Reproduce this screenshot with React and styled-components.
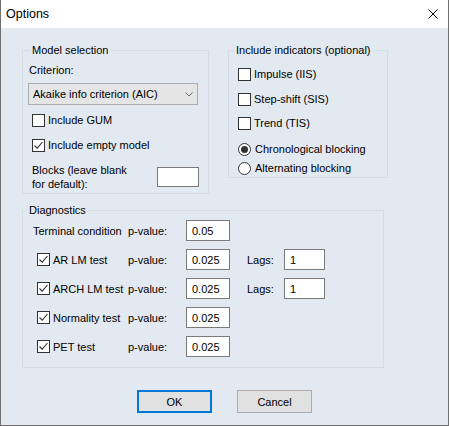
import React from 'react'
import styled, { createGlobalStyle } from 'styled-components'

const GlobalStyle = createGlobalStyle`
  *, *::before, *::after {
    box-sizing: border-box;
  }

  html, body {
    margin: 0;
    padding: 0;
    background: #ffffff;
  }

  body {
    font-family: 'Liberation Sans', Arial, sans-serif;
    font-size: 11px;
    color: #000000;
  }
`

export default function App() {
  return (
    <Window>
      <GlobalStyle />
      <TitleBar>
        <span>Options</span>
        <CloseIcon viewBox='0 0 10 10'>
          <path d='M0.5 0.5 L9.5 9.5 M9.5 0.5 L0.5 9.5' />
        </CloseIcon>
      </TitleBar>

      <Body>
        <TopRow>
          <Group $width={187} $height={151}>
            <Legend $offset={7}>Model selection</Legend>
            <ModelContent>
              <Text>Criterion:</Text>
              <Select>
                <span>Akaike info criterion (AIC)</span>
                <Chevron viewBox='0 0 8 5'>
                  <path d='M0.5 0.5 L4 4 L7.5 0.5' />
                </Chevron>
              </Select>
              <CheckRow $top={8} $indent={3}>
                <CheckBox />
                Include GUM
              </CheckRow>
              <CheckRow $top={11} $indent={3}>
                <CheckBox checked />
                Include empty model
              </CheckRow>
              <BlocksRow>
                <span>
                  Blocks (leave blank
                  <br />
                  for default):
                </span>
                <Field $width={42} $height={20} />
              </BlocksRow>
            </ModelContent>
          </Group>

          <Group $width={160} $height={135}>
            <Legend $offset={5}>Include indicators (optional)</Legend>
            <IndicatorContent>
              <CheckRow $top={5}>
                <CheckBox />
                Impulse (IIS)
              </CheckRow>
              <CheckRow $top={11}>
                <CheckBox />
                Step-shift (SIS)
              </CheckRow>
              <CheckRow $top={10}>
                <CheckBox />
                Trend (TIS)
              </CheckRow>
              <CheckRow $top={12}>
                <Radio checked />
                Chronological blocking
              </CheckRow>
              <CheckRow $top={5}>
                <Radio />
                Alternating blocking
              </CheckRow>
            </IndicatorContent>
          </Group>
        </TopRow>

        <Group $width={362} $height={165} $top={9}>
          <Legend $offset={4}>Diagnostics</Legend>
          <DiagContent>
            {diagnostics.map((row) => (
              <DiagRow key={row.label}>
                {row.checkable ? (
                  <CheckRow $indent={4}>
                    <CheckBox checked />
                    {row.label}
                  </CheckRow>
                ) : (
                  <Text>{row.label}</Text>
                )}
                <Text>p-value:</Text>
                <Field $width={44} $height={21}>
                  {row.pvalue}
                </Field>
                {row.lags && (
                  <>
                    <LagsLabel>Lags:</LagsLabel>
                    <Field $width={41} $height={21}>
                      {row.lags}
                    </Field>
                  </>
                )}
              </DiagRow>
            ))}
          </DiagContent>
        </Group>

        <Buttons>
          <Button $default>OK</Button>
          <Button>Cancel</Button>
        </Buttons>
      </Body>
    </Window>
  )
}

const diagnostics = [
  { label: 'Terminal condition', pvalue: '0.05' },
  { label: 'AR LM test', pvalue: '0.025', lags: '1', checkable: true },
  { label: 'ARCH LM test', pvalue: '0.025', lags: '1', checkable: true },
  { label: 'Normality test', pvalue: '0.025', checkable: true },
  { label: 'PET test', pvalue: '0.025', checkable: true },
]

function CheckBox({ checked }) {
  return (
    <Box>
      {checked && (
        <svg width='11' height='11' viewBox='0 0 11 11'>
          <path d='M1.5 5.5 L4.2 8.2 L9.5 2' fill='none' stroke='#333' strokeWidth='1.1' />
        </svg>
      )}
    </Box>
  )
}

function Radio({ checked }) {
  return <RadioCircle>{checked && <Dot />}</RadioCircle>
}

const Window = styled.div`
  width: 449px;
  height: 426px;
  display: flex;
  flex-direction: column;
  border: 1px solid #6f6f6f;
  border-top: none;
  background: #e3e9f1;
`

const TitleBar = styled.div`
  height: 28px;
  flex: none;
  display: flex;
  align-items: center;
  justify-content: space-between;
  padding: 0 10px 0 5px;
  background: #ffffff;
  font-family: 'Liberation Sans', Arial, sans-serif;
  font-size: 12.5px;
  color: #000;
`

const CloseIcon = styled.svg`
  width: 10px;
  height: 10px;

  path {
    stroke: #000;
    stroke-width: 1;
    fill: none;
  }
`

const Body = styled.div`
  flex: 1;
  display: flex;
  flex-direction: column;
  padding: 15px 0 0 21px;
`

const TopRow = styled.div`
  display: flex;
  align-items: flex-start;
  gap: 19px;
`

const Group = styled.fieldset`
  width: ${(p) => p.$width}px;
  height: ${(p) => p.$height}px;
  margin: ${(p) => p.$top || 0}px 0 0;
  padding: 0;
  border: 1px solid #d4dce5;
  min-inline-size: 0;
`

const Legend = styled.legend`
  margin-left: ${(p) => p.$offset}px;
  padding: 0 2px;
  line-height: 14px;
  font-size: 11px;
`

const Text = styled.span`
  line-height: 14px;
  white-space: nowrap;
`

const ModelContent = styled.div`
  display: flex;
  flex-direction: column;
  align-items: flex-start;
  padding: 6px 9px 0 6px;
`

const IndicatorContent = styled.div`
  display: flex;
  flex-direction: column;
  padding: 5px 0 0 9px;
`

const Select = styled.div`
  width: 170px;
  height: 22px;
  margin: 6px 0 0 -1px;
  display: flex;
  align-items: center;
  justify-content: space-between;
  padding: 0 4px 0 4px;
  background: #e5e5e5;
  border: 1px solid #adadad;
`

const Chevron = styled.svg`
  width: 8px;
  height: 5px;

  path {
    fill: none;
    stroke: #6a6a6a;
    stroke-width: 1;
  }
`

const CheckRow = styled.label`
  display: flex;
  align-items: center;
  gap: 3px;
  height: 14px;
  margin-top: ${(p) => p.$top || 0}px;
  margin-left: ${(p) => p.$indent || 0}px;
  white-space: nowrap;
`

const Box = styled.span`
  width: 13px;
  height: 13px;
  flex: none;
  display: flex;
  align-items: center;
  justify-content: center;
  background: #ffffff;
  border: 1px solid #333333;
`

const RadioCircle = styled.span`
  width: 13px;
  height: 13px;
  flex: none;
  display: flex;
  align-items: center;
  justify-content: center;
  margin-right: 1px;
  border-radius: 50%;
  background: #ffffff;
  border: 1px solid #333333;
`

const Dot = styled.span`
  width: 7px;
  height: 7px;
  border-radius: 50%;
  background: #333333;
`

const BlocksRow = styled.div`
  align-self: stretch;
  display: flex;
  align-items: center;
  justify-content: space-between;
  margin: 11px 0 0 3px;
  line-height: 14px;
`

const Field = styled.div`
  width: ${(p) => p.$width}px;
  height: ${(p) => p.$height}px;
  display: flex;
  align-items: center;
  padding-left: 5px;
  background: #ffffff;
  border: 1px solid #7a7a7a;
`

const DiagContent = styled.div`
  display: flex;
  flex-direction: column;
  gap: 8px;
  padding: 3px 0 0 10px;
`

const DiagRow = styled.div`
  display: grid;
  grid-template-columns: 95px 58px 44px 17px 37px 41px;
  align-items: center;
  height: 21px;
`

const LagsLabel = styled.span`
  grid-column: 5;
  line-height: 14px;
`

const Buttons = styled.div`
  display: flex;
  justify-content: center;
  gap: 25px;
  margin: 22px 0 0 -21px;
`

const Button = styled.button`
  width: 75px;
  height: 23px;
  padding: 0;
  font-family: 'Liberation Sans', Arial, sans-serif;
  font-size: 11px;
  color: #000;
  background: #e1e1e1;
  border: ${(p) => (p.$default ? '2px solid #0078d7' : '1px solid #adadad')};
`
